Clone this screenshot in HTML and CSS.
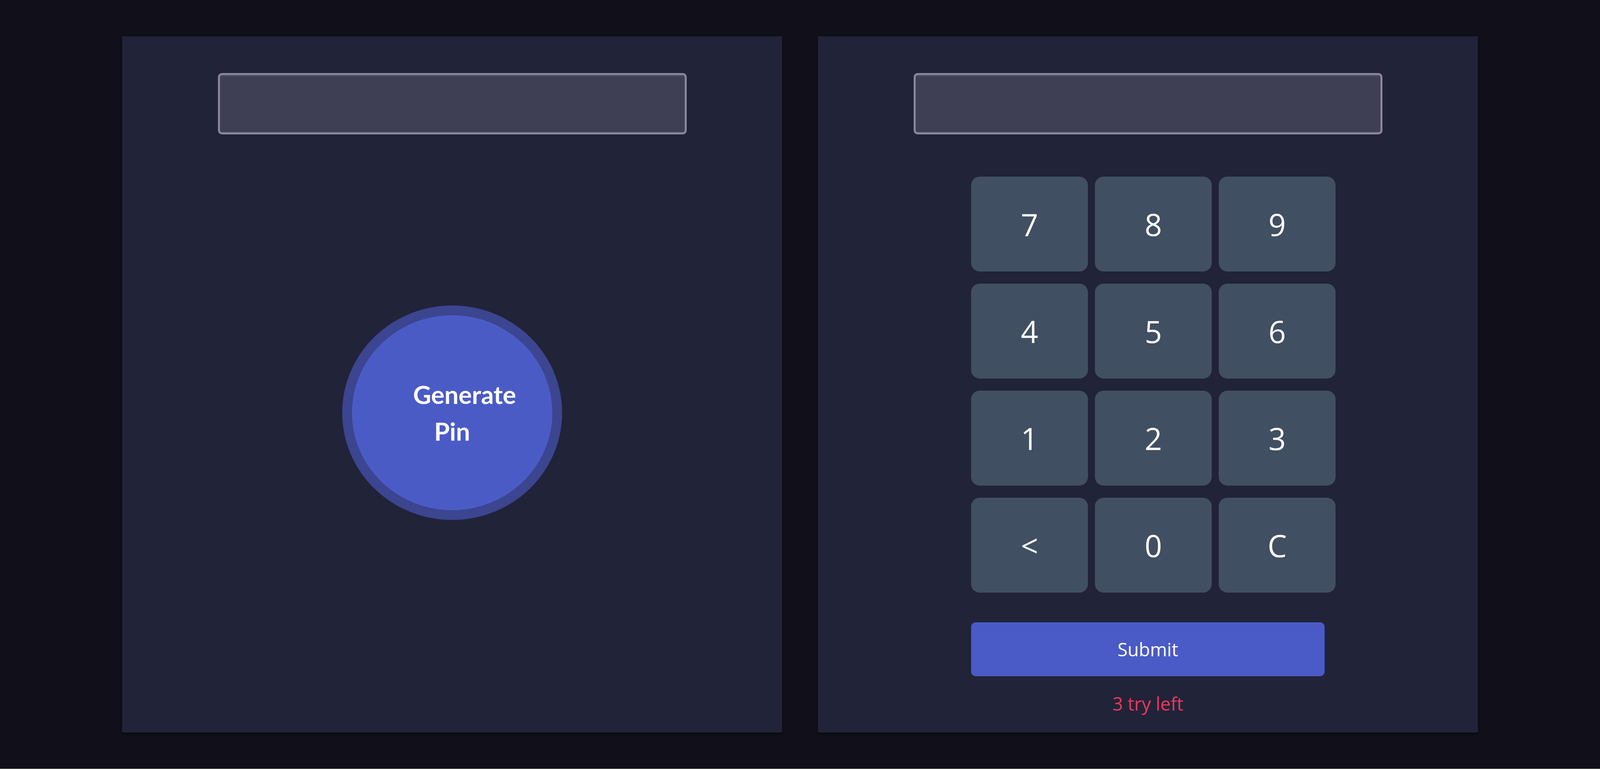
FILE: index.html
```html
<!DOCTYPE html>
<html lang="en">
<head>
<meta charset="utf-8">
<title>Pin Matcher</title>
<link rel="stylesheet" href="styles.css">
</head>
<body>
<div class="page">
  <section class="panel">
    <div class="display"></div>
    <div class="gen-btn"><span class="gen-label">Generate Pin</span></div>
  </section>
  <section class="panel">
    <div class="display"></div>
    <div class="pad">
      <div class="keys">
        <div class="key">7</div>
        <div class="key">8</div>
        <div class="key">9</div>
        <div class="key">4</div>
        <div class="key">5</div>
        <div class="key">6</div>
        <div class="key">1</div>
        <div class="key">2</div>
        <div class="key">3</div>
        <div class="key">&lt;</div>
        <div class="key">0</div>
        <div class="key">C</div>
      </div>
      <div class="submit">Submit</div>
      <div class="tries">3 try left</div>
    </div>
  </section>
</div>
</body>
</html>
```

FILE: styles.css
```css
html {
  background: #ffffff;
}
body {
  margin: 0;
  height: 1968px;
  background: #110f1a;
  font-family: "Open Sans", "Noto Sans", sans-serif;
  color: #ffffff;
}
.page {
  display: flex;
  justify-content: center;
  gap: 92px;
  padding-top: 93px;
}
.panel {
  width: 1689px;
  height: 1782px;
  background: #212338;
  box-shadow: 0 5px 5px rgba(0, 0, 0, 0.35);
  display: flex;
  flex-direction: column;
  align-items: center;
  padding-top: 94px;
  box-sizing: border-box;
}
.display {
  width: 1200px;
  height: 157px;
  box-sizing: border-box;
  border: 5px solid #8a87a2;
  border-radius: 10px;
  background: #3e3f55;
  box-shadow: inset 0 4px 0 #4c4b63, inset 0 -2px 0 #4c4b63;
}
.gen-btn {
  margin-top: 438px;
  width: 563px;
  height: 549px;
  box-sizing: border-box;
  border: 25px solid #3b4590;
  border-radius: 50%;
  background: #4b5bc6;
  display: flex;
  align-items: center;
  justify-content: center;
}
.gen-label {
  width: 200px;
  text-align: center;
  font-family: "Lato", "Open Sans", sans-serif;
  font-weight: 700;
  font-size: 64px;
  line-height: 94px;
  color: #ffffff;
}
.pad {
  width: 905px;
  margin-top: 108px;
  display: flex;
  flex-direction: column;
}
.keys {
  display: grid;
  grid-template-columns: 299px 299px 299px;
  grid-auto-rows: 243px;
  column-gap: 18px;
  row-gap: 31px;
}
.key {
  background: #414f62;
  border-radius: 22px;
  display: flex;
  align-items: center;
  justify-content: center;
  font-size: 78px;
  font-weight: 400;
  color: #ffffff;
}
.submit {
  margin-top: 76px;
  height: 138px;
  background: #4a5ac6;
  border-radius: 12px;
  display: flex;
  align-items: center;
  justify-content: center;
  font-size: 47px;
  color: #ffffff;
}
.tries {
  margin-top: 38px;
  text-align: center;
  font-size: 47px;
  line-height: 64px;
  color: #e8395b;
}
```
